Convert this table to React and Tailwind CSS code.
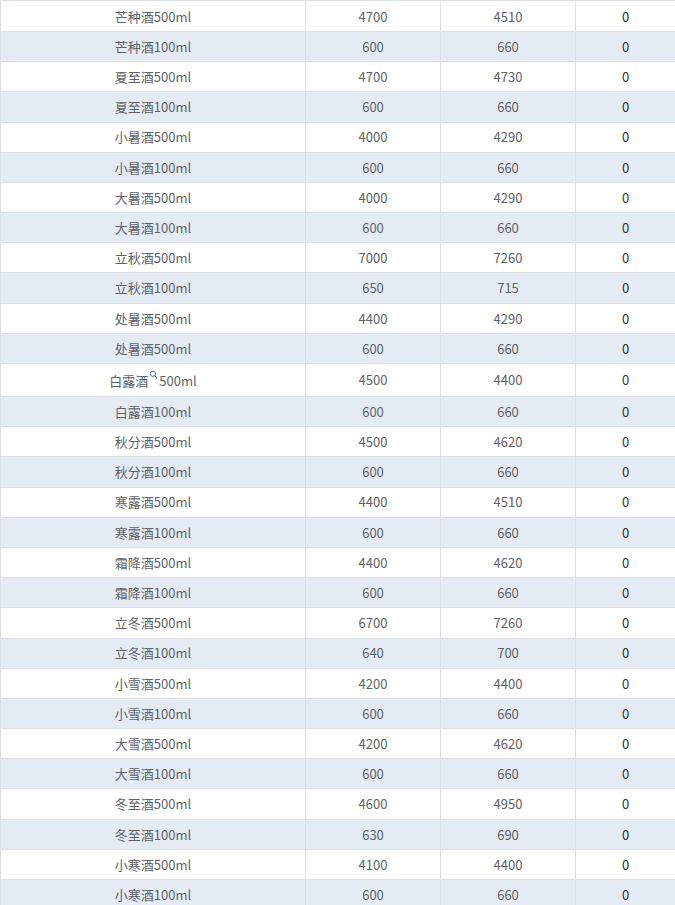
import React from 'react'

const rows = [
  ['芒种酒500ml', 4700, 4510, 0],
  ['芒种酒100ml', 600, 660, 0],
  ['夏至酒500ml', 4700, 4730, 0],
  ['夏至酒100ml', 600, 660, 0],
  ['小暑酒500ml', 4000, 4290, 0],
  ['小暑酒100ml', 600, 660, 0],
  ['大暑酒500ml', 4000, 4290, 0],
  ['大暑酒100ml', 600, 660, 0],
  ['立秋酒500ml', 7000, 7260, 0],
  ['立秋酒100ml', 650, 715, 0],
  ['处暑酒500ml', 4400, 4290, 0],
  ['处暑酒500ml', 600, 660, 0],
  ['白露酒500ml', 4500, 4400, 0],
  ['白露酒100ml', 600, 660, 0],
  ['秋分酒500ml', 4500, 4620, 0],
  ['秋分酒100ml', 600, 660, 0],
  ['寒露酒500ml', 4400, 4510, 0],
  ['寒露酒100ml', 600, 660, 0],
  ['霜降酒500ml', 4400, 4620, 0],
  ['霜降酒100ml', 600, 660, 0],
  ['立冬酒500ml', 6700, 7260, 0],
  ['立冬酒100ml', 640, 700, 0],
  ['小雪酒500ml', 4200, 4400, 0],
  ['小雪酒100ml', 600, 660, 0],
  ['大雪酒500ml', 4200, 4620, 0],
  ['大雪酒100ml', 600, 660, 0],
  ['冬至酒500ml', 4600, 4950, 0],
  ['冬至酒100ml', 630, 690, 0],
  ['小寒酒500ml', 4100, 4400, 0],
  ['小寒酒100ml', 600, 660, 0],
]

function SearchIcon() {
  return (
    <svg width="9" height="9" viewBox="0 0 9 9" className="inline-block align-top -mt-[1px] mx-[1px]">
      <circle cx="3.8" cy="3.8" r="2.6" fill="none" stroke="#5b6b8c" strokeWidth="1" />
      <line x1="5.7" y1="5.7" x2="7.8" y2="7.8" stroke="#5b6b8c" strokeWidth="1.1" strokeLinecap="round" />
    </svg>
  )
}

export default function App() {
  return (
    <div
      className="w-[675px] h-[905px] overflow-hidden bg-white border-t border-l border-[#dcdfe6] text-[13px] text-[#606266]"
      style={{ fontFamily: '"Microsoft YaHei", "Noto Sans CJK SC", "Noto Sans", sans-serif' }}
    >
      <div className="pt-[0.8px]">
        {rows.map((r, i) => {
          const special = i === 12
          return (
            <div
              key={i}
              className={
                'flex border-b border-[#dcdfe6] ' +
                (i % 2 === 1 ? 'bg-[#e5ebf5] ' : 'bg-white ') +
                (special ? 'h-[33px]' : 'h-[30.2px]')
              }
            >
              <div className="w-[305px] shrink-0 border-r border-[#dcdfe6] flex items-center justify-center">
                {special ? (
                  <span className="flex items-start pt-[2px]">
                    <span>白露酒</span>
                    <SearchIcon />
                    <span className="self-end">500ml</span>
                  </span>
                ) : (
                  r[0]
                )}
              </div>
              <div className="w-[135px] shrink-0 border-r border-[#dcdfe6] flex items-center justify-center">{r[1]}</div>
              <div className="w-[135px] shrink-0 border-r border-[#dcdfe6] flex items-center justify-center">{r[2]}</div>
              <div className="flex-1 flex items-center justify-center text-[#303133]">{r[3]}</div>
            </div>
          )
        })}
      </div>
    </div>
  )
}
